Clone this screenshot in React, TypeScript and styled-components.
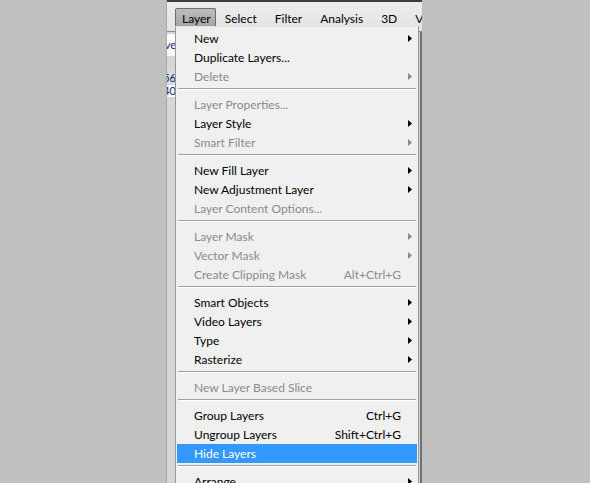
import styled, { createGlobalStyle } from 'styled-components';

const GlobalStyle = createGlobalStyle`
    html, body {
        margin: 0;
        padding: 0;
        background: #c0c0c0;
    }
    body {
        width: 590px;
        height: 483px;
        overflow: hidden;
        font-family: Lato, "Noto Sans", sans-serif;
    }
`

const Page = styled.div`
    width: 590px;
    height: 483px;
    display: flex;
    background: #c0c0c0;
    overflow: hidden;
`

const Window = styled.div`
    margin-left: 166px;
    width: 256px;
    height: 483px;
    position: relative;
    display: flex;
    flex-direction: column;
    background: #d6d6d6;
    border-left: 1px solid #a9a9a9;
    box-sizing: border-box;
`

const TopStrip = styled.div`
    height: 2px;
    background: #3e3e3e;
`

const MenuBar = styled.div`
    height: 30px;
    display: flex;
    align-items: flex-start;
    padding: 6px 0 0 8px;
    box-sizing: border-box;
    background: linear-gradient(#ededed, #e3e3e3);
    border-bottom: 1px solid #8c8c8c;
    overflow: hidden;
    white-space: nowrap;
`

const BarItem = styled.div<{ $open?: boolean }>`
    height: 18px;
    line-height: 19px;
    font-size: 12px;
    color: #000;
    padding: ${p => (p.$open ? '0 4px 0 6px' : '0 8px')};
    border: 1px solid ${p => (p.$open ? '#6e6e6e' : 'transparent')};
    border-bottom: none;
    border-radius: 2px 2px 0 0;
    background: ${p => (p.$open ? 'linear-gradient(#bdbdbd, #a4a4a4)' : 'transparent')};
`

const Body = styled.div`
    flex: 1;
    display: flex;
    border-right: 2px solid #707070;
`

const OptionsStrip = styled.div`
    width: 9px;
    display: flex;
    flex-direction: column;
    overflow: hidden;
    font-size: 11px;
    color: #0a1f7a;
`

const Field = styled.div<{ $h: number; $bg: string; $mt?: number }>`
    height: ${p => p.$h}px;
    line-height: ${p => p.$h}px;
    margin-top: ${p => p.$mt ?? 0}px;
    background: ${p => p.$bg};
    white-space: nowrap;
    display: flex;
    justify-content: flex-end;
`

const Menu = styled.div`
    position: absolute;
    left: 8px;
    top: 26px;
    width: 244px;
    bottom: -40px;
    padding: 2px 1px 0 1px;
    box-sizing: border-box;
    background: #f0f0f0;
    border: 1px solid #979797;
    border-top-color: #e2e2e2;
    font-size: 12px;
`

const Row = styled.div<{ $disabled?: boolean; $active?: boolean }>`
    height: 19px;
    display: grid;
    grid-template-columns: 1fr auto 16px;
    align-items: center;
    padding-left: 17px;
    color: ${p => (p.$active ? '#fff' : p.$disabled ? '#8b8b8b' : '#000')};
    background: ${p => (p.$active ? '#3399ff' : 'transparent')};
    white-space: nowrap;
`

const Shortcut = styled.span`
    text-align: right;
`

const Arrow = styled.svg`
    justify-self: center;
    margin-left: 2px;
`

const Separator = styled.div`
    height: 9px;
    display: flex;
    flex-direction: column;
    padding: 2px 1px 0 1px;
    box-sizing: border-box;
    &::before {
        content: '';
        height: 1px;
        background: #a0a0a0;
    }
    &::after {
        content: '';
        height: 1px;
        background: #ffffff;
    }
`

type Item = { label: string; sub?: boolean; disabled?: boolean; shortcut?: string; active?: boolean } | 'sep'

const items: Item[] = [
    { label: 'New', sub: true },
    { label: 'Duplicate Layers...' },
    { label: 'Delete', sub: true, disabled: true },
    'sep',
    { label: 'Layer Properties...', disabled: true },
    { label: 'Layer Style', sub: true },
    { label: 'Smart Filter', sub: true, disabled: true },
    'sep',
    { label: 'New Fill Layer', sub: true },
    { label: 'New Adjustment Layer', sub: true },
    { label: 'Layer Content Options...', disabled: true },
    'sep',
    { label: 'Layer Mask', sub: true, disabled: true },
    { label: 'Vector Mask', sub: true, disabled: true },
    { label: 'Create Clipping Mask', disabled: true, shortcut: 'Alt+Ctrl+G' },
    'sep',
    { label: 'Smart Objects', sub: true },
    { label: 'Video Layers', sub: true },
    { label: 'Type', sub: true },
    { label: 'Rasterize', sub: true },
    'sep',
    { label: 'New Layer Based Slice', disabled: true },
    'sep',
    { label: 'Group Layers', shortcut: 'Ctrl+G' },
    { label: 'Ungroup Layers', shortcut: 'Shift+Ctrl+G' },
    { label: 'Hide Layers', active: true },
    'sep',
    { label: 'Arrange', sub: true },
]

const barItems = ['Select', 'Filter', 'Analysis', '3D', 'View']

const App = () => {
    return (
        <Page>
            <GlobalStyle />
            <Window>
                <TopStrip />
                <MenuBar>
                    <BarItem $open>Layer</BarItem>
                    {barItems.map(b => (
                        <BarItem key={b}>{b}</BarItem>
                    ))}
                </MenuBar>
                <Body>
                    <OptionsStrip>
                        <Field $h={22} $bg="#ffffff" $mt={2}>ve</Field>
                        <Field $h={14} $bg="#dcdcdc" $mt={15}>56</Field>
                        <Field $h={12} $bg="#ffffff">40</Field>
                    </OptionsStrip>
                </Body>
                <Menu>
                    {items.map((it, i) =>
                        it === 'sep' ? (
                            <Separator key={i} />
                        ) : (
                            <Row key={i} $disabled={it.disabled} $active={it.active}>
                                <span>{it.label}</span>
                                <Shortcut>{it.shortcut ?? ''}</Shortcut>
                                {it.sub ? (
                                    <Arrow width="4" height="7" viewBox="0 0 4 7">
                                        <polygon points="0,0 4,3.5 0,7" fill={it.disabled ? '#8b8b8b' : '#000'} />
                                    </Arrow>
                                ) : (
                                    <span />
                                )}
                            </Row>
                        )
                    )}
                </Menu>
            </Window>
        </Page>
    )
}

export default App
